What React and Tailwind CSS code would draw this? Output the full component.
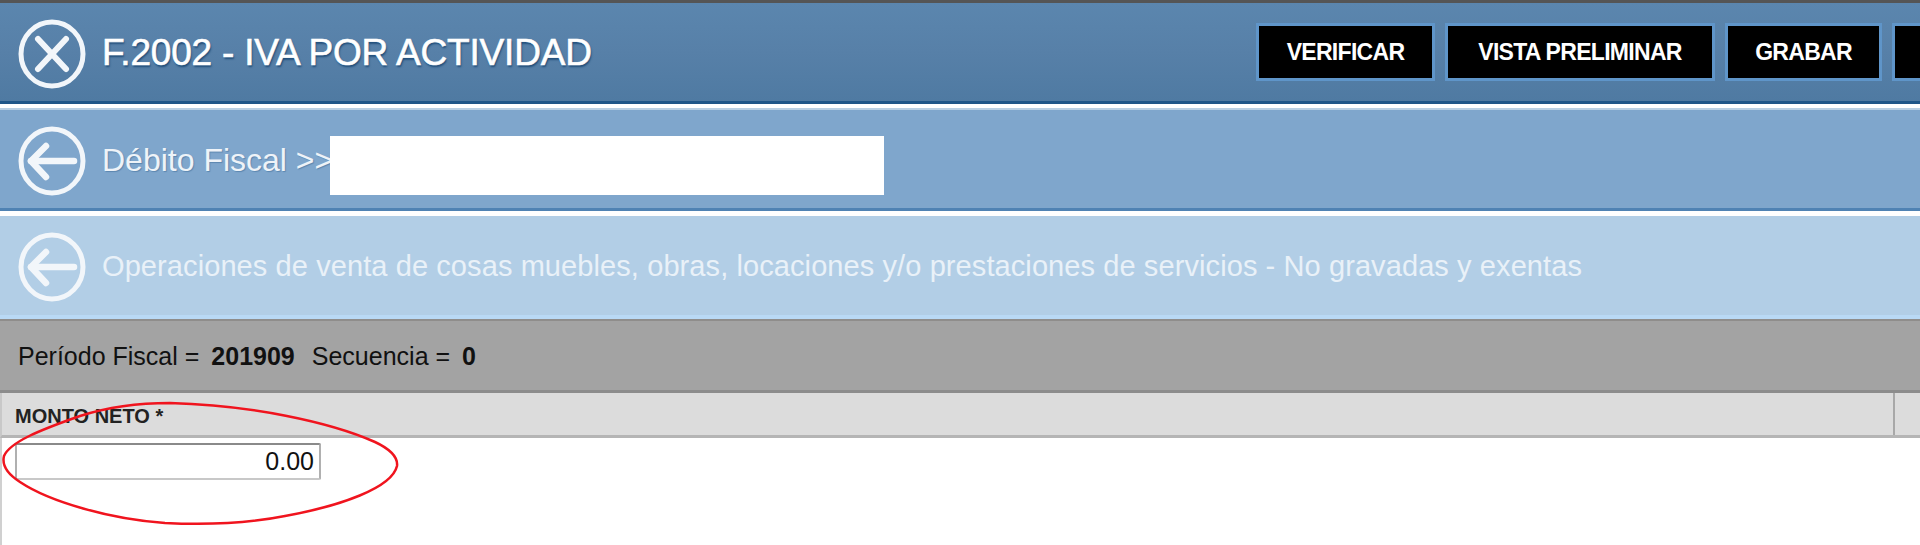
import React from "react";

function CloseIcon() {
  return (
    <svg width="68" height="70" viewBox="0 0 68 70" fill="none" stroke="#f2f6fa" className="shrink-0 mt-[3px]">
      <ellipse cx="34" cy="35" rx="31" ry="32" strokeWidth="5" />
      <path d="M20 20 L48 50 M48 20 L20 50" strokeWidth="6" strokeLinecap="round" />
    </svg>
  );
}

function BackIcon({ color = "#f2f6fa" }) {
  return (
    <svg width="68" height="70" viewBox="0 0 68 70" fill="none" stroke={color} className="shrink-0 mt-[3px]">
      <ellipse cx="34" cy="35" rx="31" ry="32" strokeWidth="5" />
      <path d="M13 35 H56" strokeWidth="6.5" strokeLinecap="round" />
      <path d="M28 20 L13 35 L28 51" strokeWidth="6.5" strokeLinecap="round" strokeLinejoin="round" />
    </svg>
  );
}

function ToolButton({ width, children }) {
  return (
    <button
      className={`${width} h-[58px] shrink-0 bg-black border-[3px] border-[#5f95c9] text-white font-bold text-[23px] tracking-[-0.7px]`}
    >
      {children}
    </button>
  );
}

export default function App() {
  return (
    <div className="relative w-[1920px] h-[545px] overflow-hidden bg-white font-['Liberation_Sans',Arial,sans-serif]">
      <div className="h-[3px] bg-[#555555]" />

      <div className="h-[101px] flex items-center pl-[18px] bg-gradient-to-b from-[#5b86ae] via-[#5780a8] to-[#4f7aa2] border-b-[3px] border-[#1f5688]">
        <CloseIcon />
        <h1 className="ml-[16px] mt-[2px] text-[37px] tracking-[-0.2px] text-white font-normal [-webkit-text-stroke:0.6px_white] [text-shadow:1px_2px_2px_#1f4c78] whitespace-nowrap">
          F.2002 - IVA POR ACTIVIDAD
        </h1>
        <div className="ml-auto flex gap-[10px] shrink-0 w-[664px]">
          <ToolButton width="w-[179px]">VERIFICAR</ToolButton>
          <ToolButton width="w-[270px]">VISTA PRELIMINAR</ToolButton>
          <ToolButton width="w-[157px]">GRABAR</ToolButton>
          <ToolButton width="w-[150px]" />
        </div>
      </div>

      <div className="h-[6px] bg-white border-b-[2px] border-[#b9d0e4]" />

      <div className="h-[101px] flex items-center pl-[18px] bg-[#7fa6cc] border-b-[3px] border-[#4f82b3]">
        <BackIcon />
        <span className="ml-[16px] mt-[2px] text-[32px] text-[#eef3f8] whitespace-nowrap [text-shadow:1px_1px_1px_#5c87b0]">
          Débito Fiscal &gt;&gt;
        </span>
        <div className="-ml-[3px] mt-[12px] w-[554px] h-[59px] bg-white" />
      </div>

      <div className="h-[5px] bg-white" />

      <div className="h-[103px] flex items-center pl-[18px] bg-[#b2cee6] border-b-[4px] border-[#b9d9f5]">
        <BackIcon />
        <span className="ml-[16px] mt-[2px] text-[29px] tracking-[0.09px] text-[#e9f1f8] whitespace-nowrap">
          Operaciones de venta de cosas muebles, obras, locaciones y/o prestaciones de servicios - No gravadas y exentas
        </span>
      </div>

      <div className="h-[74px] flex items-center pl-[18px] pt-[2px] bg-[#a3a3a3] border-t-[2px] border-b-[3px] border-t-[#8f8d8b] border-b-[#8c8c8c] text-[25px] text-[#111111] whitespace-nowrap">
        <span>Período Fiscal =</span>
        <b className="ml-[12px]">201909</b>
        <span className="ml-[17px]">Secuencia =</span>
        <b className="ml-[12px]">0</b>
      </div>

      <div className="h-[45px] flex border-b-[3px] border-[#b5b5b5] bg-[#dcdcdc] border-l-[2px] border-l-[#c8c8c8]">
        <div className="w-[1893px] pl-[13px] flex items-center border-r-[2px] border-[#a8a8a8] text-[20px] font-bold text-[#222222]">
          <span className="mt-[4px]">MONTO NETO *</span>
        </div>
      </div>

      <div className="h-[107px] border-l-[2px] border-[#d0d0d0] pl-[13px] pt-[5px]">
        <input
          readOnly
          value="0.00"
          className="w-[306px] h-[37px] pr-[5px] text-right text-[25px] text-[#111111] bg-white border-2 border-t-[#8a8a8a] border-l-[#b0b0b0] border-r-[#b0b0b0] border-b-[#c8c8c8] rounded-[2px] outline-none"
        />
      </div>

      <svg
        className="absolute left-0 top-[400px] pointer-events-none"
        width="402"
        height="130"
        viewBox="0 0 402 130"
        fill="none"
      >
        <path
          d="M170 3 C250 5 330 22 375 42 C392 50 398 58 397 66 C392 88 340 106 285 116 C250 123 205 125 165 123 C110 119 50 102 20 82 C6 73 2 64 4 56 C10 42 40 30 80 16 C105 8 135 3 170 3 Z"
          stroke="#f0141e"
          strokeWidth="2.5"
        />
      </svg>
    </div>
  );
}
